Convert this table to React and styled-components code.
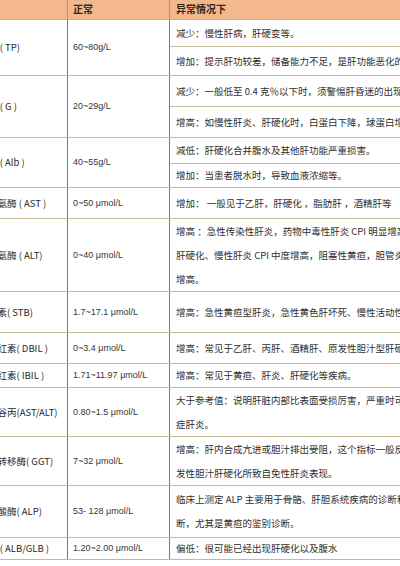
import React from 'react'
import styled, { createGlobalStyle } from 'styled-components'

const GlobalStyle = createGlobalStyle`
    html, body {
        margin: 0;
        padding: 0;
        background: #fff;
        overflow: hidden;
    }
    body {
        width: 400px;
        height: 566px;
    }
`

const rows = [
    {
        name: '总蛋白 ( TP)', normal: '60~80g/L',
        notes: [
            { h: 27, lines: ['减少：慢性肝病，肝硬变等。'] },
            { h: 29, lines: ['增加：提示肝功较差，储备能力不足，是肝功能恶化的表现。'] },
        ],
    },
    {
        name: '球蛋白 ( G )', normal: '20~29g/L',
        notes: [
            { h: 31, lines: ['减少：一般低至 0.4 克％以下时，须警惕肝昏迷的出现。'] },
            { h: 31, lines: ['增高：如慢性肝炎、肝硬化时，白蛋白下降，球蛋白增高。'] },
        ],
    },
    {
        name: '白蛋白 ( Alb )', normal: '40~55g/L',
        notes: [
            { h: 26, lines: ['减低：肝硬化合并腹水及其他肝功能严重损害。'] },
            { h: 24, lines: ['增加：当患者脱水时，导致血液浓缩等。'] },
        ],
    },
    {
        name: '谷草转氨酶 ( AST )', normal: '0~50 μmol/L',
        notes: [{ h: 31, lines: ['增加： 一般见于乙肝，肝硬化 ，脂肪肝 ，酒精肝等'] }],
    },
    {
        name: '谷丙转氨酶 ( ALT)', normal: '0~40 μmol/L',
        notes: [{
            h: 73,
            lines: [
                '增高 ：急性传染性肝炎，药物中毒性肝炎 CPI 明显增高，',
                '肝硬化、慢性肝炎 CPI 中度增高，阻塞性黄疸，胆管炎等',
                '增高。',
            ],
        }],
    },
    {
        name: '总胆红素( STB)', normal: '1.7~17.1 μmol/L',
        notes: [{ h: 41, lines: ['增高：急性黄疸型肝炎，急性黄色肝坏死、慢性活动性肝炎'] }],
    },
    {
        name: '直接胆红素( DBIL )', normal: '0~3.4 μmol/L',
        notes: [{ h: 31, lines: ['增高：常见于乙肝、丙肝、酒精肝、原发性胆汁型肝硬化'] }],
    },
    {
        name: '间接胆红素( IBIL )', normal: '1.71~11.97 μmol/L',
        notes: [{ h: 24, lines: ['增高：常见于黄疸、肝炎、肝硬化等疾病。'] }],
    },
    {
        name: '谷草／谷丙(AST/ALT)', normal: '0.80~1.5 μmol/L',
        notes: [{
            h: 49,
            lines: ['大于参考值：说明肝脏内部比表面受损厉害，严重时可能为重', '症肝炎。'],
        }],
    },
    {
        name: '谷氨酰转移酶( GGT)', normal: '7~32 μmol/L',
        notes: [{
            h: 49,
            lines: ['增高：肝内合成亢进或胆汁排出受阻，这个指标一般反映原', '发性胆汁肝硬化所致自免性肝炎表现。'],
        }],
    },
    {
        name: '碱性磷酸酶( ALP)', normal: '53- 128 μmol/L',
        notes: [{
            h: 52,
            lines: ['临床上测定 ALP 主要用于骨骼、肝胆系统疾病的诊断和鉴别诊', '断，尤其是黄疸的鉴别诊断。'],
        }],
    },
    {
        name: '白球比 ( ALB/GLB )', normal: '1.20~2.00 μmol/L',
        notes: [{ h: 22, lines: ['偏低：很可能已经出现肝硬化以及腹水'] }],
    },
]

const App = () => {
    return (
        <>
            <GlobalStyle />
            <Page>
                <Table>
                    <colgroup>
                        <col style={{ width: 104 }} />
                        <col style={{ width: 102 }} />
                        <col style={{ width: 290 }} />
                    </colgroup>
                    <thead>
                        <HeadRow>
                            <HeadCell>项目</HeadCell>
                            <HeadCell>正常</HeadCell>
                            <HeadCell $pad={6}>异常情况下</HeadCell>
                        </HeadRow>
                    </thead>
                    <tbody>
                        {rows.map(({ name, normal, notes }) => (
                            <React.Fragment key={name}>
                                {notes.map((note, i) => (
                                    <Row key={i} $h={note.h}>
                                        {i === 0 && (
                                            <>
                                                <NameCell rowSpan={notes.length}>{name}</NameCell>
                                                <ValueCell rowSpan={notes.length}>{normal}</ValueCell>
                                            </>
                                        )}
                                        <NoteCell>
                                            {note.lines.map((line) => (
                                                <NoteLine key={line} $multi={note.lines.length > 1}>
                                                    {line}
                                                </NoteLine>
                                            ))}
                                        </NoteCell>
                                    </Row>
                                ))}
                            </React.Fragment>
                        ))}
                    </tbody>
                </Table>
            </Page>
        </>
    )
}

const Page = styled.div`
    width: 400px;
    height: 566px;
    overflow: hidden;
    background: #fff;
`

const Table = styled.table`
    margin-left: -37px;
    table-layout: fixed;
    border-collapse: collapse;
    width: 496px;
    font-family: "Noto Sans CJK SC", "Liberation Sans", sans-serif;
    font-size: 9.5px;
    color: #2f2f2f;
`

const HeadRow = styled.tr`
    height: 19px;
    background: #f3b98c;
`

const HeadCell = styled.th`
    padding: 0 0 2px ${(p) => p.$pad || 5}px;
    text-align: left;
    vertical-align: middle;
    font-weight: 700;
    font-size: 10px;
    color: #33261b;
    border-left: 1px solid #a8977a;
    border-bottom: 1px solid #c9ae92;
    white-space: nowrap;
    overflow: hidden;
`

const Row = styled.tr`
    height: ${(p) => p.$h}px;
`

const Cell = styled.td`
    padding: 0 0 0 5px;
    vertical-align: middle;
    white-space: nowrap;
    overflow: hidden;
    border-left: 1px solid #847959;
    border-right: 1px solid #847959;
    border-bottom: 1px solid #c6b995;
`

const NameCell = styled(Cell)`
    color: #2a2a2a;
`

const ValueCell = styled(Cell)`
    font-family: "Liberation Sans", Arial, sans-serif;
    font-size: 9px;
    color: #363636;
`

const NoteCell = styled(Cell)`
    padding-left: 6px;
    line-height: 12px;
`

const NoteLine = styled.div`
    line-height: ${(p) => (p.$multi ? '24px' : '12px')};
`

export default App
